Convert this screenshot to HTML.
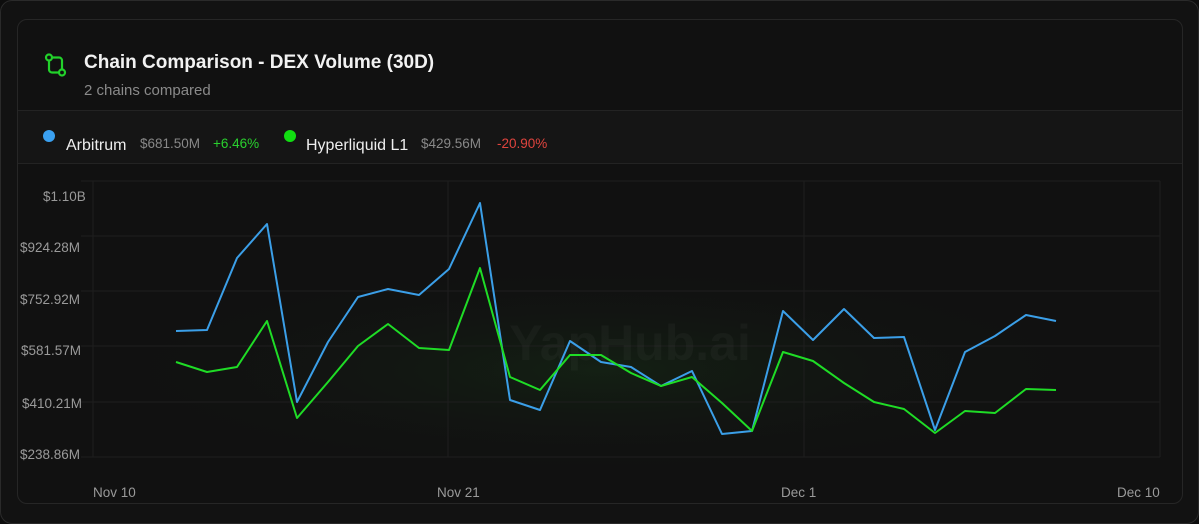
<!DOCTYPE html>
<html><head><style>
html,body{margin:0;padding:0;background:#0d0d0d;}
body{width:1199px;height:524px;overflow:hidden;font-family:"Liberation Sans",sans-serif;position:relative;}
.outer{position:absolute;left:0;top:0;width:1197px;height:522px;border:1px solid #2a2a2a;border-radius:12px;background:#121212;}
.inner{position:absolute;left:17px;top:19px;width:1164px;height:483px;border:1px solid #262626;border-radius:10px;background:#111111;overflow:hidden;}
.title{position:absolute;left:84px;top:52px;color:#f2f2f2;font-size:19px;font-weight:bold;}
.sub{position:absolute;left:84px;top:82px;color:#8a8a8a;font-size:15px;}
.legend{position:absolute;left:18px;top:110px;width:1164px;height:52px;background:#151515;border-top:1px solid #232323;border-bottom:1px solid #232323;}
.dot{position:absolute;width:12px;height:12px;border-radius:50%;}
.lt{position:absolute;font-size:16px;color:#eee;top:137px;}
.lv{position:absolute;font-size:13.5px;color:#888;top:136px;}
.ax{position:absolute;font-size:13.5px;color:#9a9a9a;}
</style></head><body>
<div class="outer"></div>
<div class="inner"></div>
<svg style="position:absolute;left:36px;top:46px" width="40" height="40" viewBox="0 0 40 40" fill="none" stroke="#22d12b" stroke-width="2.2" stroke-linecap="round">
<circle cx="13" cy="11.5" r="3"/><circle cx="26" cy="26.5" r="3"/>
<path d="M13 14.5v9a3 3 0 0 0 3 3h7"/><path d="M26 23.5v-9a3 3 0 0 0-3-3h-7"/></svg>
<div class="title">Chain Comparison - DEX Volume (30D)</div>
<div class="sub">2 chains compared</div>
<div class="legend"></div>
<div class="dot" style="left:43px;top:130px;background:#3aa0f0"></div>
<div class="lt" style="left:66px">Arbitrum</div>
<div class="lv" style="left:140px">$681.50M</div>
<div class="lv" style="left:213px;color:#2ad12f">+6.46%</div>
<div class="dot" style="left:284px;top:130px;background:#11dd11"></div>
<div class="lt" style="left:306px">Hyperliquid L1</div>
<div class="lv" style="left:421px">$429.56M</div>
<div class="lv" style="left:497px;color:#e0443e">-20.90%</div>
<svg style="position:absolute;left:0;top:0" width="1199" height="524">
<defs><radialGradient id="g" cx="0.5" cy="0.5" r="0.5"><stop offset="0" stop-color="#173317" stop-opacity="0.45"/><stop offset="1" stop-color="#111" stop-opacity="0"/></radialGradient></defs>
<ellipse cx="600" cy="370" rx="520" ry="110" fill="url(#g)"/>
<g stroke="#1e1e1e" stroke-width="1">
<line x1="81" y1="181" x2="1160" y2="181"/><line x1="81" y1="236" x2="1160" y2="236"/><line x1="81" y1="291" x2="1160" y2="291"/><line x1="81" y1="346" x2="1160" y2="346"/><line x1="81" y1="402" x2="1160" y2="402"/><line x1="81" y1="457" x2="1160" y2="457"/>
<line x1="93" y1="181" x2="93" y2="457"/><line x1="448" y1="181" x2="448" y2="457"/><line x1="804" y1="181" x2="804" y2="457"/><line x1="1160" y1="181" x2="1160" y2="457"/></g>
<text x="630" y="360" font-family="Liberation Sans" font-weight="bold" font-size="50" fill="#ffffff" fill-opacity="0.03" text-anchor="middle">YapHub.ai</text>
<polyline fill="none" stroke="#3b9fe8" stroke-width="2" stroke-linejoin="round" points="176,331 207,330 237,258 267,224 297,402 328,342 358,297 388,289 419,295 449,269 480,203 510,400 540,410 570,341 601,362 631,367 661,386 692,371 722,434 752,431 783,311 813,340 844,309 874,338 904,337 935,430 965,352 995,336 1026,315 1056,321"/>
<polyline fill="none" stroke="#1fdc26" stroke-width="2" stroke-linejoin="round" points="176,362 207,372 237,367 267,321 297,418 328,382 358,346 388,324 419,348 449,350 480,268 510,377 540,390 570,355 601,355 631,373 661,386 692,377 722,403 752,431 783,352 813,361 844,383 874,402 904,409 935,433 965,411 995,413 1026,389 1056,390"/>
</svg>
<div class="ax" style="left:43px;top:189px">$1.10B</div>
<div class="ax" style="left:20px;top:240px">$924.28M</div>
<div class="ax" style="left:20px;top:292px">$752.92M</div>
<div class="ax" style="left:21px;top:343px">$581.57M</div>
<div class="ax" style="left:22px;top:396px">$410.21M</div>
<div class="ax" style="left:20px;top:447px">$238.86M</div>
<div class="ax" style="left:93px;top:485px">Nov 10</div>
<div class="ax" style="left:437px;top:485px">Nov 21</div>
<div class="ax" style="left:781px;top:485px">Dec 1</div>
<div class="ax" style="left:1117px;top:485px">Dec 10</div>
</body></html>
